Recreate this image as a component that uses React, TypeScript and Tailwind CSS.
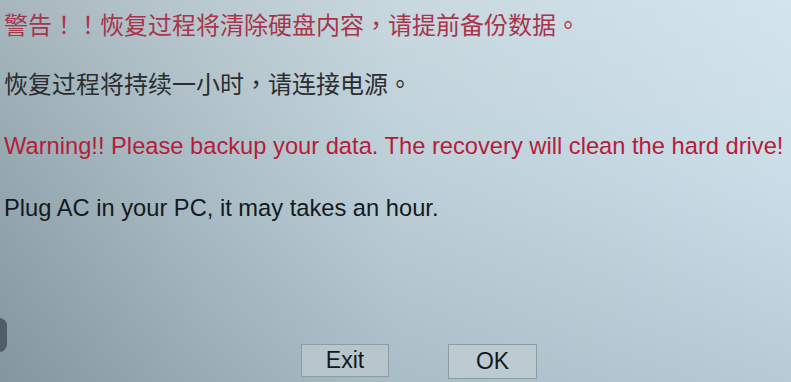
import React from "react";

export default function App() {
  return (
    <div className="relative w-[791px] h-[382px] overflow-hidden bg-[linear-gradient(90deg,#8fa2ab_0%,#a6b9c2_25%,#b9cdd6_50%,#c8dce7_100%)] font-['Liberation_Sans',Arial,sans-serif]">
      <div className="pointer-events-none absolute inset-0 bg-[linear-gradient(180deg,rgba(255,255,255,0.22)_0%,rgba(255,255,255,0.05)_45%,rgba(30,50,65,0.1)_100%)]" />
      <div className="absolute left-[-8px] top-[318px] h-[34px] w-[15px] rounded-full bg-[#4f5d66]" />
      <div className="relative flex h-full flex-col pl-[4px]">
        <p lang="zh-Hant" className="mt-[10px] text-[24px] leading-[28px] text-[#a8354c] font-['Noto_Sans_CJK_TC','Noto_Sans_CJK_SC',sans-serif]">
          警告！！恢复过程将清除硬盘内容，请提前备份数据。
        </p>
        <p lang="zh-Hant" className="mt-[31px] text-[24px] leading-[28px] text-[#2a2e31] font-['Noto_Sans_CJK_TC','Noto_Sans_CJK_SC',sans-serif]">
          恢复过程将持续一小时，请连接电源。
        </p>
        <p className="mt-[35px] text-[23.7px] leading-[28px] text-[#b51d3a]">
          Warning!! Please backup your data. The recovery will clean the hard drive!
        </p>
        <p className="mt-[34px] text-[23.7px] leading-[28px] text-[#15191c]">
          Plug AC in your PC, it may takes an hour.
        </p>
        <div className="mt-auto mb-[5px] flex gap-[59px] pl-[297px]">
          <button className="h-[33px] w-[88px] border border-[#8e9ba1] bg-[#b7c6cd] text-[23px] leading-none text-[#15191c]">
            Exit
          </button>
          <button className="mb-[-2px] h-[35px] w-[89px] border border-[#8e9ba1] bg-[#bccbd2] text-[23px] leading-none text-[#15191c]">
            OK
          </button>
        </div>
      </div>
    </div>
  );
}
